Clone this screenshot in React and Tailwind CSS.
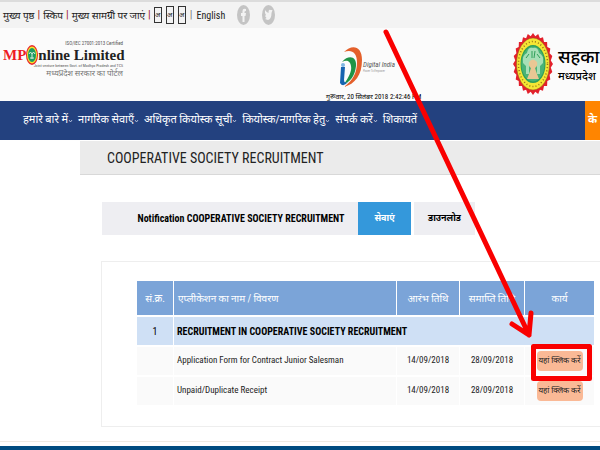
import React from "react";

const topLinks = ["मुख्य पृष्ठ", "स्किप", "मुख्य सामग्री पर जाएं"];

const menu = [
  { label: "हमारे बारे में", sub: true },
  { label: "नागरिक सेवाएँ", sub: true },
  { label: "अधिकृत कियोस्क सूची", sub: true },
  { label: "कियोस्क/नागरिक हेतु", sub: true },
  { label: "संपर्क करें", sub: true },
  { label: "शिकायतें", sub: false },
];

const services = [
  { name: "Application Form for Contract Junior Salesman", start: "14/09/2018", end: "28/09/2018" },
  { name: "Unpaid/Duplicate Receipt", start: "14/09/2018", end: "28/09/2018" },
];

// 24 teeth round the state emblem
const teeth = Array.from({ length: 48 }, (_, i) => {
  const a = (i * Math.PI) / 24;
  const k = i % 2 ? 0.9 : 1;
  return `${(20 + 20 * k * Math.cos(a)).toFixed(1)},${(31 + 31 * k * Math.sin(a)).toFixed(1)}`;
}).join(" ");

function SocialIcons() {
  return (
    <div className="flex gap-3 pl-3">
      <a href="#facebook" aria-label="Facebook">
        <svg width="13" height="20" viewBox="0 0 13 20">
          <ellipse cx="6.5" cy="10" rx="6.5" ry="10" fill="#c4c4c4" />
          <path d="M5.5 17V11H4V8H5.5V6Q5.5 3 9 4V6Q7.5 6 7.5 7V8H9L8.5 11H7.5V17Z" fill="#f3f3f3" />
        </svg>
      </a>
      <a href="#twitter" aria-label="Twitter">
        <svg width="13" height="20" viewBox="0 0 13 20">
          <ellipse cx="6.5" cy="10" rx="6.5" ry="10" fill="#c4c4c4" />
          <path d="M3 5Q5 8 6.5 8Q6.5 4 8.5 5L10.5 5L9.5 8Q9.5 14 6 15L3 14L4.5 13L3 11L4 10L3 8Z" fill="#f3f3f3" />
        </svg>
      </a>
    </div>
  );
}

function TopBar() {
  return (
    <div className="flex h-7 items-center overflow-hidden whitespace-nowrap border-t-2 border-[#dcdcdc] bg-[#f3f3f3] pl-[3px] text-[10px] text-[#222]">
      {topLinks.map((text) => (
        <React.Fragment key={text}>
          <a href="#top">{text}</a>
          <span className="px-[3px] text-[11px] text-[#a02020]">|</span>
        </React.Fragment>
      ))}
      <div className="flex items-center gap-1">
        <button className="h-4 w-2 border border-[#333] text-[7px] leading-3">अ</button>
        <button className="h-[18px] w-2 border border-[#333] text-[7px] leading-3">अ</button>
        <button className="h-[18px] w-2 border border-[#333] text-[7px] leading-3">अ</button>
      </div>
      <span className="px-1 text-[11px] text-[#777]">|</span>
      <a href="#english" className="text-[10px]">English</a>
      <SocialIcons />
    </div>
  );
}

function Logo() {
  return (
    <div className="w-[123px] shrink-0 pl-[3px] pt-3">
      <p className="text-right text-[5px] leading-[6px] text-[#555]">ISO/IEC 27001:2013 Certified</p>
      <div className="flex h-[18px] items-center whitespace-nowrap font-['Liberation_Serif',serif] text-[15px] font-bold text-[#222]">
        <span className="text-[#ee1c25]">MP</span>
        <svg className="shrink-0" width="12" height="20" viewBox="0 0 12 20">
          <ellipse cx="6" cy="10" rx="6" ry="10" fill="#e8232a" />
          <ellipse cx="6" cy="10" rx="5" ry="8.5" fill="#f4e52a" />
          <ellipse cx="6" cy="10" rx="4" ry="7" fill="#1d9b62" />
          <path d="M3 9L4.5 7L6 9L7.5 7L9 9M6 9V14M4 13H8" stroke="#d7eedd" fill="none" />
        </svg>
        <span>nline Limited</span>
      </div>
      <p className="whitespace-nowrap text-right text-[4px] leading-[4px] text-[#555]">
        Joint venture between Govt. of Madhya Pradesh and TCS
      </p>
      <p className="text-right text-[8px] leading-[12px] text-[#777]">मध्यप्रदेश सरकार का पोर्टल</p>
    </div>
  );
}

function DigitalIndia() {
  return (
    <div className="mr-[93px] ml-auto w-[94px] shrink-0 whitespace-nowrap pt-[18px]">
      <div className="flex items-center pl-[14px]">
        <svg width="23" height="42" viewBox="0 0 23 42">
          <path d="M4 6C12-2 22 0 22 14C22 29 15 38 4 41C13 34 17 27 17 16C17 6 11 3 4 6Z" fill="#e4602b" />
          <path d="M2 16C9 8 17 11 16 20C15 30 10 36 4 38C9 31 12 25 11 20C10 14 6 14 2 16Z" fill="#209447" />
          <path d="M1 21H5L4 34Q4 38 8 36Q3 42 0 37Z" fill="#1764b0" />
          <circle cx="3" cy="19" r="2" fill="#7fb6e2" />
        </svg>
        <div className="text-[7px] italic leading-[7px] text-[#555]">
          Digital India
          <p className="text-[3px] leading-[4px] text-[#999]">Power To Empower</p>
        </div>
      </div>
      <p className="pt-1 text-[7px] leading-[10px] text-black">गुरूवार, 20 सितंबर 2018 2:42:46 PM</p>
    </div>
  );
}

function Emblem() {
  return (
    <svg className="shrink-0" width="40" height="62" viewBox="0 0 40 62">
      <polygon points={teeth} fill="#e3202b" />
      <ellipse cx="20" cy="31" rx="16.5" ry="26" fill="#f5e634" stroke="#8b5a1c" strokeWidth="0.5" />
      <ellipse cx="20" cy="31" rx="14.5" ry="22.5" fill="none" stroke="#967018" strokeWidth="1.5" strokeDasharray="1 2.2" />
      <ellipse cx="20" cy="31" rx="12.5" ry="19" fill="#2f9e59" />
      <ellipse cx="20" cy="31" rx="11.5" ry="17.5" fill="#49b377" />
      <path d="M10 30Q9 22 14 20Q15 14 20 15Q25 14 26 20Q31 22 30 30L27 33V41H24V30H16V41H13V33Z" fill="#a7dfb7" />
      <path d="M13 25L16 21M19 18V25M22 18L21 25M27 25L24 21" stroke="#2f9e59" />
      <path d="M16 29Q20 24 24 29Q25 33 22 35L24 41L26 46H14L16 41L18 35Q15 33 16 29Z" fill="#e9c794" />
    </svg>
  );
}

function Header() {
  return (
    <header className="flex h-[73px] overflow-hidden bg-[#fbfbfb]">
      <Logo />
      <DigitalIndia />
      <div className="flex w-[87px] shrink-0 gap-[5px] whitespace-nowrap pt-[5px] text-black">
        <Emblem />
        <div className="pt-3">
          <p className="text-[18px] font-medium leading-[24px]">सहका</p>
          <p className="text-[11px] font-medium leading-[16px]">मध्यप्रदेश</p>
        </div>
      </div>
    </header>
  );
}

function Menu() {
  return (
    <nav className="flex h-[39px] items-center whitespace-nowrap bg-[#23417f] pl-[23px] text-[11px] text-white">
      {menu.map((m) => (
        <a key={m.label} href="#menu" className="flex items-center pr-[5px]">
          {m.label}
          {m.sub && (
            <svg width="5" height="4" viewBox="0 0 5 4">
              <path d="M1 1L2.5 3L4 1" fill="none" stroke="#cdd6ea" strokeWidth="0.8" />
            </svg>
          )}
        </a>
      ))}
      <a href="#cashless" className="ml-auto flex h-full w-[15px] items-center justify-center bg-[#ff8500] font-bold">
        के
      </a>
    </nav>
  );
}

function Tabs() {
  return (
    <div className="mt-[27px] ml-[102px] flex h-[33px] whitespace-nowrap text-[10px] font-bold">
      <button className="w-64 bg-[#eeeef2] pl-[22px] text-black">Notification COOPERATIVE SOCIETY RECRUITMENT</button>
      <button className="w-[53px] bg-[#3498db] text-[9px] text-white">सेवाएं</button>
      <button className="ml-[3px] w-[61px] bg-[#eeeef2] text-[9px] text-black">डाउनलोड</button>
    </div>
  );
}

function ServiceTable() {
  return (
    <table className="w-full table-fixed border-separate border-spacing-0 whitespace-nowrap text-[10px] text-[#222]">
      <colgroup>
        <col className="w-[37px]" />
        <col />
        <col className="w-[63px]" />
        <col className="w-[65px]" />
        <col className="w-[69px]" />
      </colgroup>
      <thead>
        <tr className="h-9 bg-[#7ba4d8] text-white">
          <th className="border-r border-b-2 border-white font-normal">सं.क्र.</th>
          <th className="border-r border-b-2 border-white pl-1 text-left font-normal">एप्लीकेशन का नाम / विवरण</th>
          <th className="border-r border-b-2 border-white font-normal">आरंभ तिथि</th>
          <th className="border-r border-b-2 border-white font-normal">समाप्ति तिथि</th>
          <th className="border-b-2 border-white font-normal">कार्य</th>
        </tr>
      </thead>
      <tbody>
        <tr className="h-[30px] bg-[#cfe0f5] text-black">
          <td className="border-r border-b-2 border-white text-center">1</td>
          <td colSpan={4} className="border-b-2 border-white pl-[3px] font-bold">
            RECRUITMENT IN COOPERATIVE SOCIETY RECRUITMENT
          </td>
        </tr>
        {services.map((s) => (
          <tr key={s.name} className="h-[30px] bg-[#fafafa] text-[9px]">
            <td className="border-r border-b-2 border-white" />
            <td className="border-r border-b-2 border-white pl-[3px]">{s.name}</td>
            <td className="border-r border-b-2 border-white text-center">{s.start}</td>
            <td className="border-r border-b-2 border-white text-center">{s.end}</td>
            <td className="border-b-2 border-white text-center">
              <button className="h-5 w-[46px] rounded-sm bg-[#fab996] align-middle text-[8px] leading-5">
                यहां क्लिक करें
              </button>
            </td>
          </tr>
        ))}
      </tbody>
    </table>
  );
}

function Arrow() {
  return (
    <svg className="pointer-events-none absolute top-0 left-0" width="600" height="450" fill="none" stroke="#f90000">
      <path d="M386 32L529 335M512 324L529 335L531 313" strokeWidth="5" strokeLinecap="round" strokeLinejoin="round" />
      <rect x="533.5" y="346.5" width="56" height="32" strokeWidth="5" strokeLinejoin="round" />
    </svg>
  );
}

export default function App() {
  return (
    <div className="relative min-h-screen overflow-hidden bg-white font-['Roboto_Condensed','Noto_Sans',sans-serif]">
      <TopBar />
      <Header />
      <Menu />
      <h1 className="mt-px ml-20 h-[34px] whitespace-nowrap border-b border-[#d8d8d8] bg-[#ebebeb] pl-[27px] text-[14px] leading-[34px] text-[#222]">
        COOPERATIVE SOCIETY RECRUITMENT
      </h1>
      <Tabs />
      <main className="mt-[26px] ml-[101px] border-y border-l border-[#eeeeee] pt-[19px] pr-[6px] pb-[19px] pl-[35px]">
        <ServiceTable />
      </main>
      <footer className="mt-[14px] border-t border-[#eeeae4] pt-1">
        <div className="h-1 bg-[#004b80]" />
      </footer>
      <Arrow />
    </div>
  );
}
